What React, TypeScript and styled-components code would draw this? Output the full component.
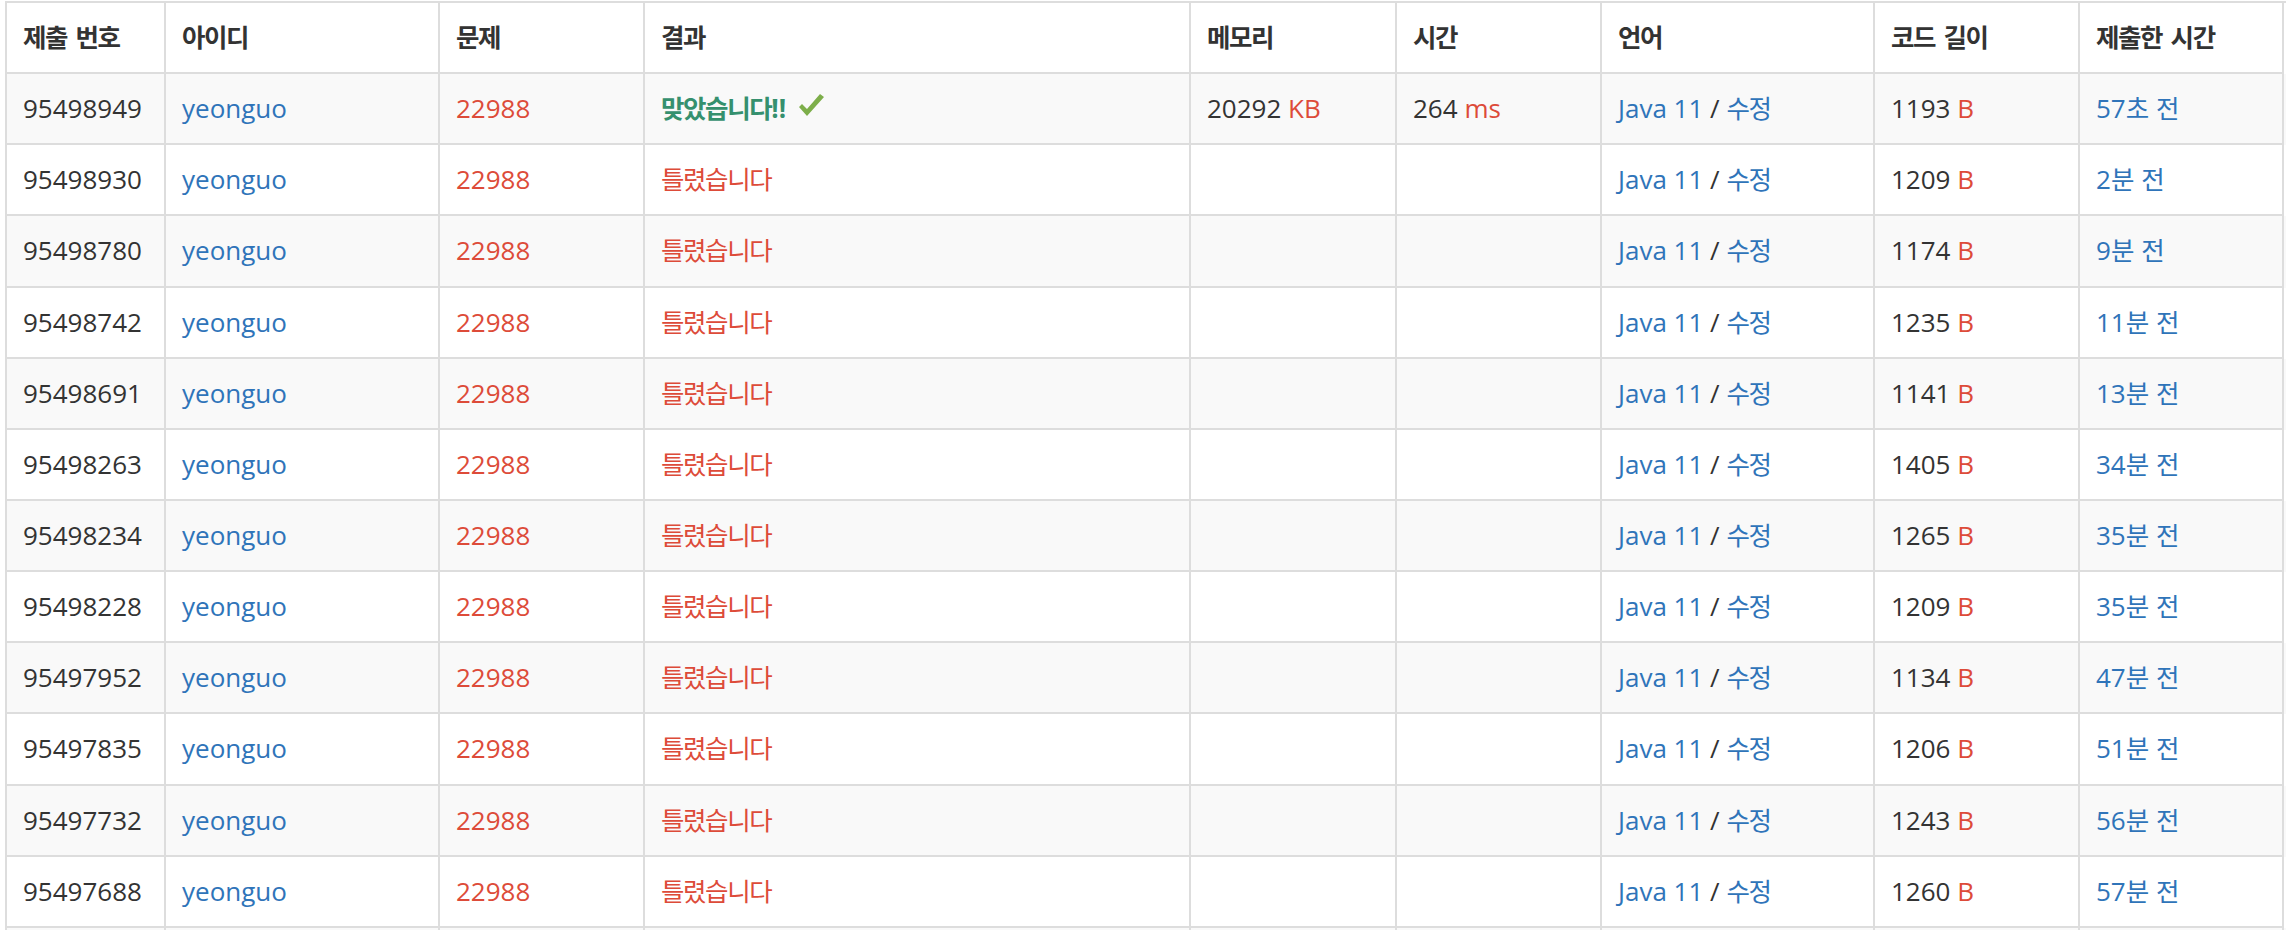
import styled, { createGlobalStyle } from "styled-components";

const GlobalStyle = createGlobalStyle`
  html, body {
    margin: 0;
    padding: 0;
    background: #fff;
  }
  body {
    font-family: "Open Sans", "Noto Sans CJK KR", sans-serif;
    color: #333;
  }
`;

const COLUMNS = "159px 274px 205px 546px 206px 205px 273px 205px 204px";

const Page = styled.div`
  padding: 1px 0 0 5px;
`;

const Board = styled.div`
  width: 2279px;
  border-top: 2px solid #ddd;
  border-left: 2px solid #ddd;
  font-size: 26px;
  line-height: 37.14px;
`;

const Row = styled.div<{ $striped?: boolean }>`
  display: grid;
  grid-template-columns: ${COLUMNS};
  background: ${props => props.$striped ? '#f9f9f9' : '#fff'};
`;

const Cell = styled.div`
  box-sizing: border-box;
  min-height: 71.14px;
  padding: 16px;
  border-right: 2px solid #ddd;
  border-bottom: 2px solid #ddd;
  white-space: nowrap;
  overflow: hidden;
`;

const HeadCell = styled(Cell)`
  font-weight: 700;
`;

// hangul runs: narrower than Noto's full-width boxes in the reference
const Ko = styled.span`
  font-family: "Noto Sans CJK KR", sans-serif;
  font-size: 25.5px;
  line-height: 1;
  letter-spacing: -1.4px;
  word-spacing: 4px;
`;

const Link = styled.span`
  color: #2f74b9;
`;

const Red = styled.span`
  color: #dd4b39;
`;

const Accepted = styled.span`
  color: #35906e;
  font-weight: 700;
`;

const Check = styled.svg`
  width: 25px;
  height: 22px;
  margin-left: 13px;
  vertical-align: 2px;
`;

type Submission = {
  id: string;
  ok: boolean;
  memory?: string;
  time?: string;
  length: string;
  ago: string;
};

const submissions: Submission[] = [
  { id: "95498949", ok: true, memory: "20292", time: "264", length: "1193", ago: "57초 전" },
  { id: "95498930", ok: false, length: "1209", ago: "2분 전" },
  { id: "95498780", ok: false, length: "1174", ago: "9분 전" },
  { id: "95498742", ok: false, length: "1235", ago: "11분 전" },
  { id: "95498691", ok: false, length: "1141", ago: "13분 전" },
  { id: "95498263", ok: false, length: "1405", ago: "34분 전" },
  { id: "95498234", ok: false, length: "1265", ago: "35분 전" },
  { id: "95498228", ok: false, length: "1209", ago: "35분 전" },
  { id: "95497952", ok: false, length: "1134", ago: "47분 전" },
  { id: "95497835", ok: false, length: "1206", ago: "51분 전" },
  { id: "95497732", ok: false, length: "1243", ago: "56분 전" },
  { id: "95497688", ok: false, length: "1260", ago: "57분 전" },
];

const headers = ["제출 번호", "아이디", "문제", "결과", "메모리", "시간", "언어", "코드 길이", "제출한 시간"];

// splits "57초 전" into latin digits and a hangul run
const Ago = ({ text }: { text: string }) => {
  const m = text.match(/^(\d+)(.*)$/);
  if (!m) return <Ko>{text}</Ko>;
  return <>{m[1]}<Ko>{m[2]}</Ko></>;
};

const CheckMark = () => (
  <Check viewBox="0 0 25 22">
    <polygon points="0,13 3,10 8,15 21,0 25,3 8,22" fill="#7dae4a" />
  </Check>
);

const App = (): JSX.Element => {
  return (
    <Page>
      <GlobalStyle />
      <Board>
        <Row>
          {headers.map(h => (
            <HeadCell key={h}><Ko>{h}</Ko></HeadCell>
          ))}
        </Row>
        {submissions.map((s, i) => (
          <Row key={s.id} $striped={i % 2 === 0}>
            <Cell>{s.id}</Cell>
            <Cell><Link>yeonguo</Link></Cell>
            <Cell><Red>22988</Red></Cell>
            <Cell>
              {s.ok
                ? <><Accepted><Ko>맞았습니다</Ko>!!</Accepted><CheckMark /></>
                : <Red><Ko>틀렸습니다</Ko></Red>}
            </Cell>
            <Cell>{s.memory && <>{s.memory} <Red>KB</Red></>}</Cell>
            <Cell>{s.time && <>{s.time} <Red>ms</Red></>}</Cell>
            <Cell><Link>Java 11</Link> / <Link><Ko>수정</Ko></Link></Cell>
            <Cell>{s.length} <Red>B</Red></Cell>
            <Cell><Link><Ago text={s.ago} /></Link></Cell>
          </Row>
        ))}
        {/* next row starts just below the fold */}
        <Row $striped>
          {headers.map(h => <Cell key={h} />)}
        </Row>
      </Board>
    </Page>
  );
};

export default App;
